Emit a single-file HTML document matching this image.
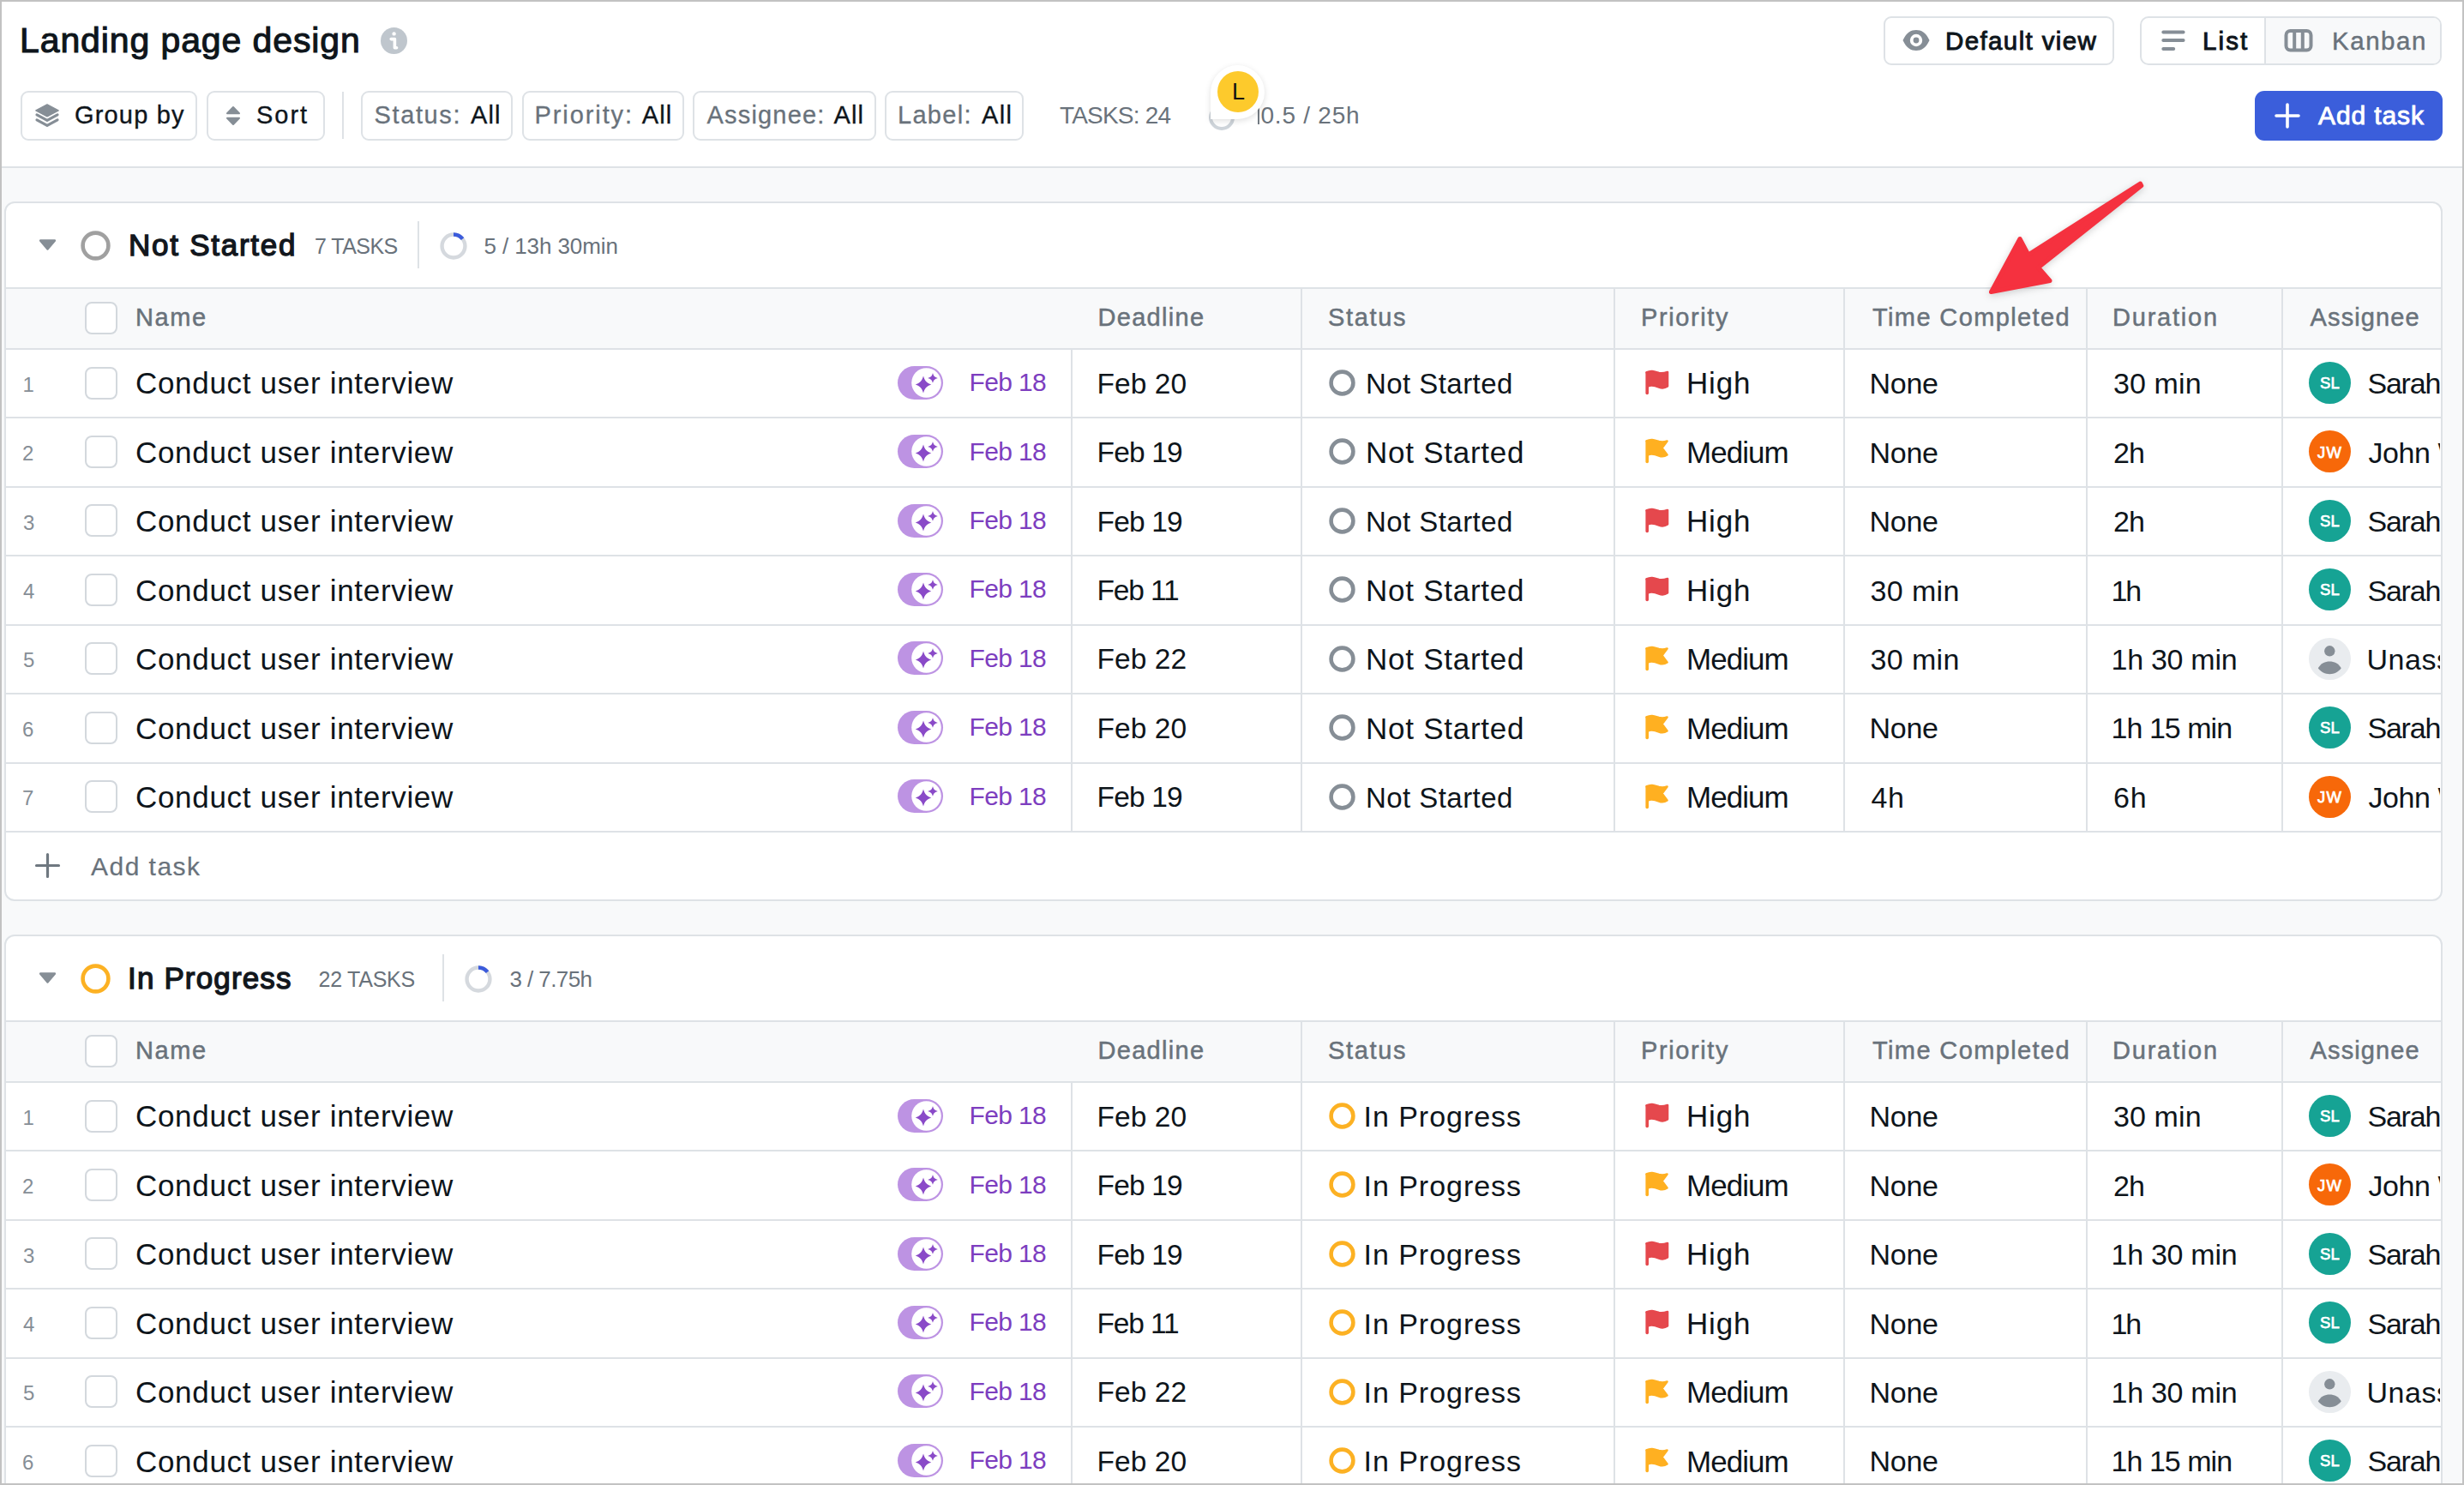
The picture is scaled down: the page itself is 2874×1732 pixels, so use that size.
<!DOCTYPE html>
<html><head><meta charset="utf-8"><title>Landing page design</title>
<style>
html,body{margin:0;padding:0;}
body{width:2874px;height:1732px;position:relative;overflow:hidden;background:#fff;font-family:"Liberation Sans", sans-serif;}
.t{position:absolute;white-space:nowrap;}
.clipR{position:absolute;left:0;top:0;width:2846px;height:1732px;overflow:hidden;}
</style></head><body>
<div style="position:absolute;left:0;top:196px;width:2874px;height:1536px;background:#f8f9fa"></div>
<div style="position:absolute;left:0;top:194px;width:2874px;height:2px;background:#dee2e6"></div>
<div class="t" style="left:23.00px;top:27.29px;font-size:41px;line-height:41px;color:#0e151b;letter-spacing:0.893px;-webkit-text-stroke:1.1px #0e151b;">Landing page design</div>
<svg style="position:absolute;left:443px;top:31px" width="33" height="33" viewBox="0 0 33 33"><circle cx="16.5" cy="16.5" r="15.5" fill="#bfc6cd"/><circle cx="16.6" cy="8.4" r="2.2" fill="#fff"/><path d="M13.2 14.6h4.2v10.2h2.2" stroke="#fff" stroke-width="3.6" fill="none" stroke-linejoin="round" stroke-linecap="round"/></svg>
<div style="position:absolute;left:24px;top:106px;width:206px;height:58px;box-sizing:border-box;border:2px solid #dee2e6;border-radius:9px;background:#fff"></div>
<svg style="position:absolute;left:40px;top:120px" width="30" height="30" viewBox="0 0 30 30"><path d="M15 1.8 L28.2 8.9 L15 16 L1.8 8.9 Z" fill="#868e96" stroke="#868e96" stroke-width="1.2" stroke-linejoin="round"/><path d="M3 13.8 L15 20.3 L27 13.8" fill="none" stroke="#868e96" stroke-width="3.2" stroke-linecap="round" stroke-linejoin="round"/><path d="M3 19.8 L15 26.3 L27 19.8" fill="none" stroke="#868e96" stroke-width="3.2" stroke-linecap="round" stroke-linejoin="round"/></svg>
<div class="t" style="left:87.00px;top:119.95px;font-size:29px;line-height:29px;color:#0e151b;letter-spacing:1.174px;-webkit-text-stroke:0.35px #0e151b;">Group by</div>
<div style="position:absolute;left:241px;top:106px;width:138px;height:58px;box-sizing:border-box;border:2px solid #dee2e6;border-radius:9px;background:#fff"></div>
<svg style="position:absolute;left:262px;top:122px" width="20" height="26" viewBox="0 0 20 26"><path d="M10 3 L17 10.2 H3 Z" fill="#868e96" stroke="#868e96" stroke-width="2" stroke-linejoin="round"/><path d="M10 23 L17 15.8 H3 Z" fill="#868e96" stroke="#868e96" stroke-width="2" stroke-linejoin="round"/></svg>
<div class="t" style="left:299.00px;top:119.95px;font-size:29px;line-height:29px;color:#0e151b;letter-spacing:1.957px;-webkit-text-stroke:0.35px #0e151b;">Sort</div>
<div style="position:absolute;left:399px;top:107px;width:2px;height:55px;background:#dee2e6"></div>
<div style="position:absolute;left:421px;top:106px;width:177px;height:58px;box-sizing:border-box;border:2px solid #dee2e6;border-radius:9px;background:#fff"></div>
<div class="t" style="left:436.50px;top:119.95px;font-size:29px;line-height:29px;color:#69727b;letter-spacing:1.631px;-webkit-text-stroke:0.3px #69727b;">Status:</div>
<div class="t" style="left:549.00px;top:119.95px;font-size:29px;line-height:29px;color:#0e151b;letter-spacing:1.107px;-webkit-text-stroke:0.35px #0e151b;">All</div>
<div style="position:absolute;left:609px;top:106px;width:189px;height:58px;box-sizing:border-box;border:2px solid #dee2e6;border-radius:9px;background:#fff"></div>
<div class="t" style="left:623.50px;top:119.95px;font-size:29px;line-height:29px;color:#69727b;letter-spacing:1.909px;-webkit-text-stroke:0.3px #69727b;">Priority:</div>
<div class="t" style="left:748.75px;top:119.95px;font-size:29px;line-height:29px;color:#0e151b;letter-spacing:1.107px;-webkit-text-stroke:0.35px #0e151b;">All</div>
<div style="position:absolute;left:808px;top:106px;width:214px;height:58px;box-sizing:border-box;border:2px solid #dee2e6;border-radius:9px;background:#fff"></div>
<div class="t" style="left:824.50px;top:119.95px;font-size:29px;line-height:29px;color:#69727b;letter-spacing:1.181px;-webkit-text-stroke:0.3px #69727b;">Assignee:</div>
<div class="t" style="left:972.50px;top:119.95px;font-size:29px;line-height:29px;color:#0e151b;letter-spacing:1.107px;-webkit-text-stroke:0.35px #0e151b;">All</div>
<div style="position:absolute;left:1032px;top:106px;width:162px;height:58px;box-sizing:border-box;border:2px solid #dee2e6;border-radius:9px;background:#fff"></div>
<div class="t" style="left:1047.00px;top:119.95px;font-size:29px;line-height:29px;color:#69727b;letter-spacing:1.309px;-webkit-text-stroke:0.3px #69727b;">Label:</div>
<div class="t" style="left:1145.00px;top:119.95px;font-size:29px;line-height:29px;color:#0e151b;letter-spacing:1.357px;-webkit-text-stroke:0.35px #0e151b;">All</div>
<div class="t" style="left:1236.00px;top:121.30px;font-size:28px;line-height:28px;color:#69727b;letter-spacing:-0.795px;">TASKS: 24</div>
<svg style="position:absolute;left:1405px;top:117px" width="40" height="40" viewBox="0 0 40 40"><circle cx="20" cy="20" r="13" fill="none" stroke="#ced4da" stroke-width="4"/></svg>
<div class="t" style="left:1470.50px;top:121.30px;font-size:28px;line-height:28px;color:#69727b;letter-spacing:0.762px;">0.5 / 25h</div>
<div style="position:absolute;left:1466.6px;top:125.5px;width:2.6px;height:19.5px;background:#737b83"></div>
<div style="position:absolute;left:1412px;top:76px;width:63px;height:63px;background:#fff;border-radius:32px 32px 32px 0;box-shadow:0 2px 7px rgba(0,0,0,0.13)"></div>
<div style="position:absolute;left:1420px;top:83px;width:48px;height:48px;background:#fdca2c;border-radius:50%"></div>
<div class="t" style="left:1437.00px;top:93.84px;font-size:27px;line-height:27px;color:#111;">L</div>
<div style="position:absolute;left:2197px;top:19px;width:269px;height:57px;box-sizing:border-box;border:2px solid #dee2e6;border-radius:9px;background:#fff"></div>
<svg style="position:absolute;left:2217px;top:33px" width="36" height="28" viewBox="0 0 36 28"><path d="M2.5 14 C7 4.5 12 2 18 2 C24 2 29 4.5 33.5 14 C29 23.5 24 26 18 26 C12 26 7 23.5 2.5 14 Z" fill="#868e96"/><circle cx="18" cy="14" r="7.2" fill="#fff"/><circle cx="18" cy="14" r="3.4" fill="#868e96"/></svg>
<div class="t" style="left:2269.00px;top:32.53px;font-size:29.5px;line-height:29.5px;color:#0e151b;letter-spacing:1.384px;-webkit-text-stroke:0.95px #0e151b;">Default view</div>
<div style="position:absolute;left:2496px;top:19px;width:352px;height:57px;box-sizing:border-box;border:2px solid #dee2e6;border-radius:10px;background:#fff;overflow:hidden"><div style="position:absolute;left:142.5px;top:0;width:208px;height:53px;background:#f8f9fa;border-left:2px solid #dee2e6"></div></div>
<svg style="position:absolute;left:2519px;top:33px" width="32" height="28" viewBox="0 0 32 28"><path d="M4.3 4.6 H27.6 M4.3 14 H27.6 M4.3 24 H16.2" stroke="#868e96" stroke-width="4" stroke-linecap="round"/></svg>
<div class="t" style="left:2569.00px;top:32.53px;font-size:29.5px;line-height:29.5px;color:#0e151b;letter-spacing:2.097px;-webkit-text-stroke:0.95px #0e151b;">List</div>
<svg style="position:absolute;left:2662px;top:32px" width="38" height="30" viewBox="0 0 38 30"><rect x="4.5" y="4" width="29" height="22.5" rx="5" fill="none" stroke="#868e96" stroke-width="4"/><path d="M14.2 4 V26.5 M23.8 4 V26.5" stroke="#868e96" stroke-width="4"/></svg>
<div class="t" style="left:2720.00px;top:32.53px;font-size:29.5px;line-height:29.5px;color:#69727b;letter-spacing:1.540px;-webkit-text-stroke:0.45px #69727b;">Kanban</div>
<div style="position:absolute;left:2630px;top:106px;width:219px;height:58px;background:#3b5edb;border-radius:11px"></div>
<svg style="position:absolute;left:2652px;top:119px" width="32" height="32" viewBox="0 0 32 32"><path d="M16 3 V29 M3 16 H29" stroke="#fff" stroke-width="3.6" stroke-linecap="round"/></svg>
<div class="t" style="left:2704.00px;top:119.61px;font-size:30px;line-height:30px;color:#fff;letter-spacing:0.895px;-webkit-text-stroke:0.9px #fff;">Add task</div>
<div style="position:absolute;left:5px;top:235px;width:2844px;height:816px;box-sizing:border-box;border:2px solid #dee2e6;border-radius:12px;background:#fff"></div>
<svg style="position:absolute;left:44px;top:278px" width="23" height="15" viewBox="0 0 23 15"><path d="M3.2 2.6 H19.8 L11.5 12.4 Z" fill="#868e96" stroke="#868e96" stroke-width="2.6" stroke-linejoin="round"/></svg>
<svg style="position:absolute;left:93px;top:268px" width="37" height="37" viewBox="0 0 37 37"><circle cx="18.5" cy="18.5" r="14.9" fill="none" stroke="#a0a0a0" stroke-width="4.6"/></svg>
<div class="t" style="left:150.00px;top:268.37px;font-size:35px;line-height:35px;color:#12171d;letter-spacing:1.743px;-webkit-text-stroke:1.35px #12171d;">Not Started</div>
<div class="t" style="left:367.00px;top:274.84px;font-size:25px;line-height:25px;color:#69727b;letter-spacing:-0.548px;">7 TASKS</div>
<div style="position:absolute;left:486.5px;top:258px;width:2px;height:55px;background:#dee2e6"></div>
<svg style="position:absolute;left:513px;top:271px" width="32" height="32" viewBox="0 0 32 32"><circle cx="16" cy="16" r="13.45" fill="none" stroke="#d5d9de" stroke-width="4.4"/><path d="M16 2.5500000000000007 A13.45 13.45 0 0 1 26.60 7.72" fill="none" stroke="#3b5bdb" stroke-width="4.4"/></svg>
<div class="t" style="left:564.40px;top:273.99px;font-size:26px;line-height:26px;color:#69727b;letter-spacing:-0.082px;">5 / 13h 30min</div>
<div style="position:absolute;left:7px;top:335px;width:2840px;height:2px;background:#dee2e6"></div>
<div style="position:absolute;left:7px;top:337px;width:2840px;height:69px;background:#f8f9fa"></div>
<div style="position:absolute;left:7px;top:406px;width:2840px;height:2px;background:#dee2e6"></div>
<div style="position:absolute;left:1517px;top:337px;width:2px;height:69px;background:#dee2e6"></div>
<div style="position:absolute;left:1882px;top:337px;width:2px;height:69px;background:#dee2e6"></div>
<div style="position:absolute;left:2150px;top:337px;width:2px;height:69px;background:#dee2e6"></div>
<div style="position:absolute;left:2433px;top:337px;width:2px;height:69px;background:#dee2e6"></div>
<div style="position:absolute;left:2661px;top:337px;width:2px;height:69px;background:#dee2e6"></div>
<div style="position:absolute;left:99px;top:352px;width:38px;height:38px;box-sizing:border-box;border:2px solid #d3d8dd;border-radius:8px;background:#fff"></div>
<div class="t" style="left:158.00px;top:356.45px;font-size:29px;line-height:29px;color:#69727b;letter-spacing:1.590px;-webkit-text-stroke:0.5px #69727b;">Name</div>
<div class="t" style="left:1280.50px;top:356.45px;font-size:29px;line-height:29px;color:#69727b;letter-spacing:1.308px;-webkit-text-stroke:0.5px #69727b;">Deadline</div>
<div class="t" style="left:1549.00px;top:356.45px;font-size:29px;line-height:29px;color:#69727b;letter-spacing:1.657px;-webkit-text-stroke:0.5px #69727b;">Status</div>
<div class="t" style="left:1914.00px;top:356.45px;font-size:29px;line-height:29px;color:#69727b;letter-spacing:1.610px;-webkit-text-stroke:0.5px #69727b;">Priority</div>
<div class="t" style="left:2184.00px;top:356.45px;font-size:29px;line-height:29px;color:#69727b;letter-spacing:1.382px;-webkit-text-stroke:0.5px #69727b;">Time Completed</div>
<div class="t" style="left:2464.00px;top:356.45px;font-size:29px;line-height:29px;color:#69727b;letter-spacing:1.788px;-webkit-text-stroke:0.5px #69727b;">Duration</div>
<div class="t" style="left:2694.60px;top:356.45px;font-size:29px;line-height:29px;color:#69727b;letter-spacing:1.118px;-webkit-text-stroke:0.5px #69727b;">Assignee</div>
<div style="position:absolute;left:7px;top:486px;width:2840px;height:2px;background:#dee2e6"></div>
<div style="position:absolute;left:1249px;top:408px;width:2px;height:78px;background:#dee2e6"></div>
<div style="position:absolute;left:1517px;top:408px;width:2px;height:78px;background:#dee2e6"></div>
<div style="position:absolute;left:1882px;top:408px;width:2px;height:78px;background:#dee2e6"></div>
<div style="position:absolute;left:2150px;top:408px;width:2px;height:78px;background:#dee2e6"></div>
<div style="position:absolute;left:2433px;top:408px;width:2px;height:78px;background:#dee2e6"></div>
<div style="position:absolute;left:2661px;top:408px;width:2px;height:78px;background:#dee2e6"></div>
<div class="t" style="left:26.50px;top:436.70px;font-size:24px;line-height:24px;color:#868e96;">1</div>
<div style="position:absolute;left:99px;top:427.5px;width:38px;height:38px;box-sizing:border-box;border:2px solid #d3d8dd;border-radius:8px;background:#fff"></div>
<div class="t" style="left:158.00px;top:429.39px;font-size:35px;line-height:35px;color:#0e151b;letter-spacing:0.680px;">Conduct user interview</div>
<svg style="position:absolute;left:1046px;top:425.7px" width="55" height="41" viewBox="0 0 55 41"><rect x="1" y="1" width="53" height="39" rx="19.5" fill="#bd93e3"/><circle cx="34.5" cy="20.5" r="17.3" fill="#fff"/><path d="M31 12.6 C32.6 18.4 35 20.8 40.2 22.6 C35 24.4 32.6 26.8 31 32.6 C29.4 26.8 27 24.4 21.8 22.6 C27 20.8 29.4 18.4 31 12.6 Z" fill="#8a4ac8"/><path d="M42 9.0 C42.9 12.5 44.1 13.9 47.8 14.9 C44.1 15.9 42.9 17.3 42 20.8 C41.1 17.3 39.9 15.9 36.2 14.9 C39.9 13.9 41.1 12.5 42 9.0 Z" fill="#8a4ac8"/></svg>
<div class="t" style="left:1130.50px;top:431.12px;font-size:30px;line-height:30px;color:#7d3ebf;letter-spacing:-0.643px;">Feb 18</div>
<div class="t" style="left:1279.50px;top:430.66px;font-size:33.5px;line-height:33.5px;color:#0e151b;letter-spacing:0.067px;">Feb 20</div>
<svg style="position:absolute;left:1548px;top:429.0px" width="35" height="35" viewBox="0 0 35 35"><circle cx="17.5" cy="17.5" r="12.9" fill="none" stroke="#868e96" stroke-width="4.6"/></svg>
<div class="t" style="left:1593.00px;top:431.08px;font-size:33px;line-height:33px;color:#0e151b;letter-spacing:0.444px;">Not Started</div>
<svg style="position:absolute;left:1916.4px;top:430.01500000000004px" width="32" height="32" viewBox="0 0 32 32"><path d="M4.5 4.5 C10 1.5 14 3.5 19 5 C23 6 26 5 29 4 V20.5 C26 22.5 23 23 19 21.5 C14 19.5 10 18.5 6 20.5" fill="#e5484d" stroke="#e5484d" stroke-width="2.6" stroke-linejoin="round" stroke-linecap="round"/><path d="M5.2 5 V28.5" stroke="#e5484d" stroke-width="3.6" stroke-linecap="round"/></svg>
<div class="t" style="left:1967.00px;top:429.39px;font-size:35px;line-height:35px;color:#0e151b;letter-spacing:0.828px;">High</div>
<div class="t" style="left:2180.50px;top:430.23px;font-size:34px;line-height:34px;color:#0e151b;letter-spacing:-0.291px;">None</div>
<div class="t" style="left:2465.00px;top:430.23px;font-size:34px;line-height:34px;color:#0e151b;letter-spacing:0.112px;">30 min</div>
<div style="position:absolute;left:2693px;top:422.01500000000004px;width:49px;height:49px;border-radius:50%;background:#16a394"></div>
<div class="t" style="left:2706.00px;top:438.15px;font-size:18.5px;line-height:18.5px;color:#fff;letter-spacing:0.161px;-webkit-text-stroke:0.75px #fff;">SL</div>
<div class="t" style="left:2761.40px;top:430.23px;font-size:34px;line-height:34px;color:#0e151b;letter-spacing:-1.180px;width:84.60px;overflow:hidden;">Sarah</div>
<div style="position:absolute;left:7px;top:567px;width:2840px;height:2px;background:#dee2e6"></div>
<div style="position:absolute;left:1249px;top:488px;width:2px;height:79px;background:#dee2e6"></div>
<div style="position:absolute;left:1517px;top:488px;width:2px;height:79px;background:#dee2e6"></div>
<div style="position:absolute;left:1882px;top:488px;width:2px;height:79px;background:#dee2e6"></div>
<div style="position:absolute;left:2150px;top:488px;width:2px;height:79px;background:#dee2e6"></div>
<div style="position:absolute;left:2433px;top:488px;width:2px;height:79px;background:#dee2e6"></div>
<div style="position:absolute;left:2661px;top:488px;width:2px;height:79px;background:#dee2e6"></div>
<div class="t" style="left:26.00px;top:517.13px;font-size:24px;line-height:24px;color:#868e96;">2</div>
<div style="position:absolute;left:99px;top:507.9px;width:38px;height:38px;box-sizing:border-box;border:2px solid #d3d8dd;border-radius:8px;background:#fff"></div>
<div class="t" style="left:158.00px;top:509.82px;font-size:35px;line-height:35px;color:#0e151b;letter-spacing:0.680px;">Conduct user interview</div>
<svg style="position:absolute;left:1046px;top:506.1px" width="55" height="41" viewBox="0 0 55 41"><rect x="1" y="1" width="53" height="39" rx="19.5" fill="#bd93e3"/><circle cx="34.5" cy="20.5" r="17.3" fill="#fff"/><path d="M31 12.6 C32.6 18.4 35 20.8 40.2 22.6 C35 24.4 32.6 26.8 31 32.6 C29.4 26.8 27 24.4 21.8 22.6 C27 20.8 29.4 18.4 31 12.6 Z" fill="#8a4ac8"/><path d="M42 9.0 C42.9 12.5 44.1 13.9 47.8 14.9 C44.1 15.9 42.9 17.3 42 20.8 C41.1 17.3 39.9 15.9 36.2 14.9 C39.9 13.9 41.1 12.5 42 9.0 Z" fill="#8a4ac8"/></svg>
<div class="t" style="left:1130.50px;top:511.55px;font-size:30px;line-height:30px;color:#7d3ebf;letter-spacing:-0.643px;">Feb 18</div>
<div class="t" style="left:1279.50px;top:511.09px;font-size:33.5px;line-height:33.5px;color:#0e151b;letter-spacing:-0.833px;">Feb 19</div>
<svg style="position:absolute;left:1548px;top:509.4px" width="35" height="35" viewBox="0 0 35 35"><circle cx="17.5" cy="17.5" r="12.9" fill="none" stroke="#868e96" stroke-width="4.6"/></svg>
<div class="t" style="left:1593.00px;top:510.07px;font-size:35px;line-height:35px;color:#0e151b;letter-spacing:0.743px;">Not Started</div>
<svg style="position:absolute;left:1916.4px;top:510.44499999999994px" width="32" height="32" viewBox="0 0 32 32"><path d="M4.5 4.5 C10 1.5 14 3.5 19 5 C23 6 25.5 5.5 28.5 4.5 L22.5 12.5 L28.5 20.5 C25.5 22.5 23 23 19 21.5 C14 19.5 10 18.5 6 20.5" fill="#ffb021" stroke="#ffb021" stroke-width="2.6" stroke-linejoin="round" stroke-linecap="round"/><path d="M5.2 5 V28.5" stroke="#ffb021" stroke-width="3.6" stroke-linecap="round"/></svg>
<div class="t" style="left:1967.00px;top:509.82px;font-size:35px;line-height:35px;color:#0e151b;letter-spacing:-0.965px;">Medium</div>
<div class="t" style="left:2180.50px;top:510.66px;font-size:34px;line-height:34px;color:#0e151b;letter-spacing:-0.291px;">None</div>
<div class="t" style="left:2465.00px;top:510.66px;font-size:34px;line-height:34px;color:#0e151b;letter-spacing:-0.909px;">2h</div>
<div style="position:absolute;left:2693px;top:502.44499999999994px;width:49px;height:49px;border-radius:50%;background:#f76809"></div>
<div class="t" style="left:2703.00px;top:518.58px;font-size:18.5px;line-height:18.5px;color:#fff;letter-spacing:1.350px;-webkit-text-stroke:0.75px #fff;">JW</div>
<div class="t" style="left:2762.40px;top:510.66px;font-size:34px;line-height:34px;color:#0e151b;letter-spacing:-0.406px;width:83.60px;overflow:hidden;">John Williams</div>
<div style="position:absolute;left:7px;top:647px;width:2840px;height:2px;background:#dee2e6"></div>
<div style="position:absolute;left:1249px;top:569px;width:2px;height:78px;background:#dee2e6"></div>
<div style="position:absolute;left:1517px;top:569px;width:2px;height:78px;background:#dee2e6"></div>
<div style="position:absolute;left:1882px;top:569px;width:2px;height:78px;background:#dee2e6"></div>
<div style="position:absolute;left:2150px;top:569px;width:2px;height:78px;background:#dee2e6"></div>
<div style="position:absolute;left:2433px;top:569px;width:2px;height:78px;background:#dee2e6"></div>
<div style="position:absolute;left:2661px;top:569px;width:2px;height:78px;background:#dee2e6"></div>
<div class="t" style="left:27.00px;top:597.56px;font-size:24px;line-height:24px;color:#868e96;">3</div>
<div style="position:absolute;left:99px;top:588.4px;width:38px;height:38px;box-sizing:border-box;border:2px solid #d3d8dd;border-radius:8px;background:#fff"></div>
<div class="t" style="left:158.00px;top:590.25px;font-size:35px;line-height:35px;color:#0e151b;letter-spacing:0.680px;">Conduct user interview</div>
<svg style="position:absolute;left:1046px;top:586.6px" width="55" height="41" viewBox="0 0 55 41"><rect x="1" y="1" width="53" height="39" rx="19.5" fill="#bd93e3"/><circle cx="34.5" cy="20.5" r="17.3" fill="#fff"/><path d="M31 12.6 C32.6 18.4 35 20.8 40.2 22.6 C35 24.4 32.6 26.8 31 32.6 C29.4 26.8 27 24.4 21.8 22.6 C27 20.8 29.4 18.4 31 12.6 Z" fill="#8a4ac8"/><path d="M42 9.0 C42.9 12.5 44.1 13.9 47.8 14.9 C44.1 15.9 42.9 17.3 42 20.8 C41.1 17.3 39.9 15.9 36.2 14.9 C39.9 13.9 41.1 12.5 42 9.0 Z" fill="#8a4ac8"/></svg>
<div class="t" style="left:1130.50px;top:591.98px;font-size:30px;line-height:30px;color:#7d3ebf;letter-spacing:-0.643px;">Feb 18</div>
<div class="t" style="left:1279.50px;top:591.52px;font-size:33.5px;line-height:33.5px;color:#0e151b;letter-spacing:-0.833px;">Feb 19</div>
<svg style="position:absolute;left:1548px;top:589.9px" width="35" height="35" viewBox="0 0 35 35"><circle cx="17.5" cy="17.5" r="12.9" fill="none" stroke="#868e96" stroke-width="4.6"/></svg>
<div class="t" style="left:1593.00px;top:591.94px;font-size:33px;line-height:33px;color:#0e151b;letter-spacing:0.444px;">Not Started</div>
<svg style="position:absolute;left:1916.4px;top:590.875px" width="32" height="32" viewBox="0 0 32 32"><path d="M4.5 4.5 C10 1.5 14 3.5 19 5 C23 6 26 5 29 4 V20.5 C26 22.5 23 23 19 21.5 C14 19.5 10 18.5 6 20.5" fill="#e5484d" stroke="#e5484d" stroke-width="2.6" stroke-linejoin="round" stroke-linecap="round"/><path d="M5.2 5 V28.5" stroke="#e5484d" stroke-width="3.6" stroke-linecap="round"/></svg>
<div class="t" style="left:1967.00px;top:590.25px;font-size:35px;line-height:35px;color:#0e151b;letter-spacing:0.828px;">High</div>
<div class="t" style="left:2180.50px;top:591.09px;font-size:34px;line-height:34px;color:#0e151b;letter-spacing:-0.291px;">None</div>
<div class="t" style="left:2465.00px;top:591.09px;font-size:34px;line-height:34px;color:#0e151b;letter-spacing:-0.909px;">2h</div>
<div style="position:absolute;left:2693px;top:582.875px;width:49px;height:49px;border-radius:50%;background:#16a394"></div>
<div class="t" style="left:2706.00px;top:599.01px;font-size:18.5px;line-height:18.5px;color:#fff;letter-spacing:0.161px;-webkit-text-stroke:0.75px #fff;">SL</div>
<div class="t" style="left:2761.40px;top:591.09px;font-size:34px;line-height:34px;color:#0e151b;letter-spacing:-1.180px;width:84.60px;overflow:hidden;">Sarah</div>
<div style="position:absolute;left:7px;top:728px;width:2840px;height:2px;background:#dee2e6"></div>
<div style="position:absolute;left:1249px;top:649px;width:2px;height:79px;background:#dee2e6"></div>
<div style="position:absolute;left:1517px;top:649px;width:2px;height:79px;background:#dee2e6"></div>
<div style="position:absolute;left:1882px;top:649px;width:2px;height:79px;background:#dee2e6"></div>
<div style="position:absolute;left:2150px;top:649px;width:2px;height:79px;background:#dee2e6"></div>
<div style="position:absolute;left:2433px;top:649px;width:2px;height:79px;background:#dee2e6"></div>
<div style="position:absolute;left:2661px;top:649px;width:2px;height:79px;background:#dee2e6"></div>
<div class="t" style="left:27.00px;top:677.99px;font-size:24px;line-height:24px;color:#868e96;">4</div>
<div style="position:absolute;left:99px;top:668.8px;width:38px;height:38px;box-sizing:border-box;border:2px solid #d3d8dd;border-radius:8px;background:#fff"></div>
<div class="t" style="left:158.00px;top:670.68px;font-size:35px;line-height:35px;color:#0e151b;letter-spacing:0.680px;">Conduct user interview</div>
<svg style="position:absolute;left:1046px;top:667.0px" width="55" height="41" viewBox="0 0 55 41"><rect x="1" y="1" width="53" height="39" rx="19.5" fill="#bd93e3"/><circle cx="34.5" cy="20.5" r="17.3" fill="#fff"/><path d="M31 12.6 C32.6 18.4 35 20.8 40.2 22.6 C35 24.4 32.6 26.8 31 32.6 C29.4 26.8 27 24.4 21.8 22.6 C27 20.8 29.4 18.4 31 12.6 Z" fill="#8a4ac8"/><path d="M42 9.0 C42.9 12.5 44.1 13.9 47.8 14.9 C44.1 15.9 42.9 17.3 42 20.8 C41.1 17.3 39.9 15.9 36.2 14.9 C39.9 13.9 41.1 12.5 42 9.0 Z" fill="#8a4ac8"/></svg>
<div class="t" style="left:1130.50px;top:672.41px;font-size:30px;line-height:30px;color:#7d3ebf;letter-spacing:-0.643px;">Feb 18</div>
<div class="t" style="left:1279.50px;top:671.95px;font-size:33.5px;line-height:33.5px;color:#0e151b;letter-spacing:-1.135px;">Feb 11</div>
<svg style="position:absolute;left:1548px;top:670.3px" width="35" height="35" viewBox="0 0 35 35"><circle cx="17.5" cy="17.5" r="12.9" fill="none" stroke="#868e96" stroke-width="4.6"/></svg>
<div class="t" style="left:1593.00px;top:670.93px;font-size:35px;line-height:35px;color:#0e151b;letter-spacing:0.743px;">Not Started</div>
<svg style="position:absolute;left:1916.4px;top:671.305px" width="32" height="32" viewBox="0 0 32 32"><path d="M4.5 4.5 C10 1.5 14 3.5 19 5 C23 6 26 5 29 4 V20.5 C26 22.5 23 23 19 21.5 C14 19.5 10 18.5 6 20.5" fill="#e5484d" stroke="#e5484d" stroke-width="2.6" stroke-linejoin="round" stroke-linecap="round"/><path d="M5.2 5 V28.5" stroke="#e5484d" stroke-width="3.6" stroke-linecap="round"/></svg>
<div class="t" style="left:1967.00px;top:670.68px;font-size:35px;line-height:35px;color:#0e151b;letter-spacing:0.828px;">High</div>
<div class="t" style="left:2181.50px;top:671.52px;font-size:34px;line-height:34px;color:#0e151b;letter-spacing:0.372px;">30 min</div>
<div class="t" style="left:2462.50px;top:671.52px;font-size:34px;line-height:34px;color:#0e151b;letter-spacing:-2.109px;">1h</div>
<div style="position:absolute;left:2693px;top:663.305px;width:49px;height:49px;border-radius:50%;background:#16a394"></div>
<div class="t" style="left:2706.00px;top:679.44px;font-size:18.5px;line-height:18.5px;color:#fff;letter-spacing:0.161px;-webkit-text-stroke:0.75px #fff;">SL</div>
<div class="t" style="left:2761.40px;top:671.52px;font-size:34px;line-height:34px;color:#0e151b;letter-spacing:-1.180px;width:84.60px;overflow:hidden;">Sarah</div>
<div style="position:absolute;left:7px;top:808px;width:2840px;height:2px;background:#dee2e6"></div>
<div style="position:absolute;left:1249px;top:730px;width:2px;height:78px;background:#dee2e6"></div>
<div style="position:absolute;left:1517px;top:730px;width:2px;height:78px;background:#dee2e6"></div>
<div style="position:absolute;left:1882px;top:730px;width:2px;height:78px;background:#dee2e6"></div>
<div style="position:absolute;left:2150px;top:730px;width:2px;height:78px;background:#dee2e6"></div>
<div style="position:absolute;left:2433px;top:730px;width:2px;height:78px;background:#dee2e6"></div>
<div style="position:absolute;left:2661px;top:730px;width:2px;height:78px;background:#dee2e6"></div>
<div class="t" style="left:27.00px;top:758.42px;font-size:24px;line-height:24px;color:#868e96;">5</div>
<div style="position:absolute;left:99px;top:749.2px;width:38px;height:38px;box-sizing:border-box;border:2px solid #d3d8dd;border-radius:8px;background:#fff"></div>
<div class="t" style="left:158.00px;top:751.11px;font-size:35px;line-height:35px;color:#0e151b;letter-spacing:0.680px;">Conduct user interview</div>
<svg style="position:absolute;left:1046px;top:747.4px" width="55" height="41" viewBox="0 0 55 41"><rect x="1" y="1" width="53" height="39" rx="19.5" fill="#bd93e3"/><circle cx="34.5" cy="20.5" r="17.3" fill="#fff"/><path d="M31 12.6 C32.6 18.4 35 20.8 40.2 22.6 C35 24.4 32.6 26.8 31 32.6 C29.4 26.8 27 24.4 21.8 22.6 C27 20.8 29.4 18.4 31 12.6 Z" fill="#8a4ac8"/><path d="M42 9.0 C42.9 12.5 44.1 13.9 47.8 14.9 C44.1 15.9 42.9 17.3 42 20.8 C41.1 17.3 39.9 15.9 36.2 14.9 C39.9 13.9 41.1 12.5 42 9.0 Z" fill="#8a4ac8"/></svg>
<div class="t" style="left:1130.50px;top:752.84px;font-size:30px;line-height:30px;color:#7d3ebf;letter-spacing:-0.643px;">Feb 18</div>
<div class="t" style="left:1279.50px;top:752.38px;font-size:33.5px;line-height:33.5px;color:#0e151b;letter-spacing:0.067px;">Feb 22</div>
<svg style="position:absolute;left:1548px;top:750.7px" width="35" height="35" viewBox="0 0 35 35"><circle cx="17.5" cy="17.5" r="12.9" fill="none" stroke="#868e96" stroke-width="4.6"/></svg>
<div class="t" style="left:1593.00px;top:751.36px;font-size:35px;line-height:35px;color:#0e151b;letter-spacing:0.743px;">Not Started</div>
<svg style="position:absolute;left:1916.4px;top:751.735px" width="32" height="32" viewBox="0 0 32 32"><path d="M4.5 4.5 C10 1.5 14 3.5 19 5 C23 6 25.5 5.5 28.5 4.5 L22.5 12.5 L28.5 20.5 C25.5 22.5 23 23 19 21.5 C14 19.5 10 18.5 6 20.5" fill="#ffb021" stroke="#ffb021" stroke-width="2.6" stroke-linejoin="round" stroke-linecap="round"/><path d="M5.2 5 V28.5" stroke="#ffb021" stroke-width="3.6" stroke-linecap="round"/></svg>
<div class="t" style="left:1967.00px;top:751.11px;font-size:35px;line-height:35px;color:#0e151b;letter-spacing:-0.965px;">Medium</div>
<div class="t" style="left:2181.50px;top:751.95px;font-size:34px;line-height:34px;color:#0e151b;letter-spacing:0.372px;">30 min</div>
<div class="t" style="left:2462.50px;top:751.95px;font-size:34px;line-height:34px;color:#0e151b;letter-spacing:-0.276px;">1h 30 min</div>
<svg style="position:absolute;left:2693px;top:743.735px" width="49" height="49" viewBox="0 0 49 49"><circle cx="24.5" cy="24.5" r="24.5" fill="#e9ecef"/><circle cx="24.3" cy="15.3" r="6.2" fill="#868e96"/><path d="M10.8 35.3 C14 29.5 19 27.4 24.3 27.4 C29.6 27.4 34.6 29.5 37.8 35.3 C34.2 40 29.8 42.2 24.3 42.2 C18.8 42.2 14.4 40 10.8 35.3 Z" fill="#868e96"/></svg>
<div class="t" style="left:2760.40px;top:751.95px;font-size:34px;line-height:34px;color:#0e151b;letter-spacing:0.550px;width:85.60px;overflow:hidden;">Unassigned</div>
<div style="position:absolute;left:7px;top:889px;width:2840px;height:2px;background:#dee2e6"></div>
<div style="position:absolute;left:1249px;top:810px;width:2px;height:79px;background:#dee2e6"></div>
<div style="position:absolute;left:1517px;top:810px;width:2px;height:79px;background:#dee2e6"></div>
<div style="position:absolute;left:1882px;top:810px;width:2px;height:79px;background:#dee2e6"></div>
<div style="position:absolute;left:2150px;top:810px;width:2px;height:79px;background:#dee2e6"></div>
<div style="position:absolute;left:2433px;top:810px;width:2px;height:79px;background:#dee2e6"></div>
<div style="position:absolute;left:2661px;top:810px;width:2px;height:79px;background:#dee2e6"></div>
<div class="t" style="left:26.00px;top:838.85px;font-size:24px;line-height:24px;color:#868e96;">6</div>
<div style="position:absolute;left:99px;top:829.7px;width:38px;height:38px;box-sizing:border-box;border:2px solid #d3d8dd;border-radius:8px;background:#fff"></div>
<div class="t" style="left:158.00px;top:831.54px;font-size:35px;line-height:35px;color:#0e151b;letter-spacing:0.680px;">Conduct user interview</div>
<svg style="position:absolute;left:1046px;top:827.9px" width="55" height="41" viewBox="0 0 55 41"><rect x="1" y="1" width="53" height="39" rx="19.5" fill="#bd93e3"/><circle cx="34.5" cy="20.5" r="17.3" fill="#fff"/><path d="M31 12.6 C32.6 18.4 35 20.8 40.2 22.6 C35 24.4 32.6 26.8 31 32.6 C29.4 26.8 27 24.4 21.8 22.6 C27 20.8 29.4 18.4 31 12.6 Z" fill="#8a4ac8"/><path d="M42 9.0 C42.9 12.5 44.1 13.9 47.8 14.9 C44.1 15.9 42.9 17.3 42 20.8 C41.1 17.3 39.9 15.9 36.2 14.9 C39.9 13.9 41.1 12.5 42 9.0 Z" fill="#8a4ac8"/></svg>
<div class="t" style="left:1130.50px;top:833.27px;font-size:30px;line-height:30px;color:#7d3ebf;letter-spacing:-0.643px;">Feb 18</div>
<div class="t" style="left:1279.50px;top:832.81px;font-size:33.5px;line-height:33.5px;color:#0e151b;letter-spacing:0.067px;">Feb 20</div>
<svg style="position:absolute;left:1548px;top:831.2px" width="35" height="35" viewBox="0 0 35 35"><circle cx="17.5" cy="17.5" r="12.9" fill="none" stroke="#868e96" stroke-width="4.6"/></svg>
<div class="t" style="left:1593.00px;top:831.79px;font-size:35px;line-height:35px;color:#0e151b;letter-spacing:0.743px;">Not Started</div>
<svg style="position:absolute;left:1916.4px;top:832.165px" width="32" height="32" viewBox="0 0 32 32"><path d="M4.5 4.5 C10 1.5 14 3.5 19 5 C23 6 25.5 5.5 28.5 4.5 L22.5 12.5 L28.5 20.5 C25.5 22.5 23 23 19 21.5 C14 19.5 10 18.5 6 20.5" fill="#ffb021" stroke="#ffb021" stroke-width="2.6" stroke-linejoin="round" stroke-linecap="round"/><path d="M5.2 5 V28.5" stroke="#ffb021" stroke-width="3.6" stroke-linecap="round"/></svg>
<div class="t" style="left:1967.00px;top:831.54px;font-size:35px;line-height:35px;color:#0e151b;letter-spacing:-0.965px;">Medium</div>
<div class="t" style="left:2180.50px;top:832.38px;font-size:34px;line-height:34px;color:#0e151b;letter-spacing:-0.291px;">None</div>
<div class="t" style="left:2462.50px;top:832.38px;font-size:34px;line-height:34px;color:#0e151b;letter-spacing:-0.963px;">1h 15 min</div>
<div style="position:absolute;left:2693px;top:824.165px;width:49px;height:49px;border-radius:50%;background:#16a394"></div>
<div class="t" style="left:2706.00px;top:840.30px;font-size:18.5px;line-height:18.5px;color:#fff;letter-spacing:0.161px;-webkit-text-stroke:0.75px #fff;">SL</div>
<div class="t" style="left:2761.40px;top:832.38px;font-size:34px;line-height:34px;color:#0e151b;letter-spacing:-1.180px;width:84.60px;overflow:hidden;">Sarah</div>
<div style="position:absolute;left:7px;top:969px;width:2840px;height:2px;background:#dee2e6"></div>
<div style="position:absolute;left:1249px;top:891px;width:2px;height:78px;background:#dee2e6"></div>
<div style="position:absolute;left:1517px;top:891px;width:2px;height:78px;background:#dee2e6"></div>
<div style="position:absolute;left:1882px;top:891px;width:2px;height:78px;background:#dee2e6"></div>
<div style="position:absolute;left:2150px;top:891px;width:2px;height:78px;background:#dee2e6"></div>
<div style="position:absolute;left:2433px;top:891px;width:2px;height:78px;background:#dee2e6"></div>
<div style="position:absolute;left:2661px;top:891px;width:2px;height:78px;background:#dee2e6"></div>
<div class="t" style="left:26.00px;top:919.28px;font-size:24px;line-height:24px;color:#868e96;">7</div>
<div style="position:absolute;left:99px;top:910.1px;width:38px;height:38px;box-sizing:border-box;border:2px solid #d3d8dd;border-radius:8px;background:#fff"></div>
<div class="t" style="left:158.00px;top:911.97px;font-size:35px;line-height:35px;color:#0e151b;letter-spacing:0.680px;">Conduct user interview</div>
<svg style="position:absolute;left:1046px;top:908.3px" width="55" height="41" viewBox="0 0 55 41"><rect x="1" y="1" width="53" height="39" rx="19.5" fill="#bd93e3"/><circle cx="34.5" cy="20.5" r="17.3" fill="#fff"/><path d="M31 12.6 C32.6 18.4 35 20.8 40.2 22.6 C35 24.4 32.6 26.8 31 32.6 C29.4 26.8 27 24.4 21.8 22.6 C27 20.8 29.4 18.4 31 12.6 Z" fill="#8a4ac8"/><path d="M42 9.0 C42.9 12.5 44.1 13.9 47.8 14.9 C44.1 15.9 42.9 17.3 42 20.8 C41.1 17.3 39.9 15.9 36.2 14.9 C39.9 13.9 41.1 12.5 42 9.0 Z" fill="#8a4ac8"/></svg>
<div class="t" style="left:1130.50px;top:913.70px;font-size:30px;line-height:30px;color:#7d3ebf;letter-spacing:-0.643px;">Feb 18</div>
<div class="t" style="left:1279.50px;top:913.24px;font-size:33.5px;line-height:33.5px;color:#0e151b;letter-spacing:-0.833px;">Feb 19</div>
<svg style="position:absolute;left:1548px;top:911.6px" width="35" height="35" viewBox="0 0 35 35"><circle cx="17.5" cy="17.5" r="12.9" fill="none" stroke="#868e96" stroke-width="4.6"/></svg>
<div class="t" style="left:1593.00px;top:913.66px;font-size:33px;line-height:33px;color:#0e151b;letter-spacing:0.444px;">Not Started</div>
<svg style="position:absolute;left:1916.4px;top:912.595px" width="32" height="32" viewBox="0 0 32 32"><path d="M4.5 4.5 C10 1.5 14 3.5 19 5 C23 6 25.5 5.5 28.5 4.5 L22.5 12.5 L28.5 20.5 C25.5 22.5 23 23 19 21.5 C14 19.5 10 18.5 6 20.5" fill="#ffb021" stroke="#ffb021" stroke-width="2.6" stroke-linejoin="round" stroke-linecap="round"/><path d="M5.2 5 V28.5" stroke="#ffb021" stroke-width="3.6" stroke-linecap="round"/></svg>
<div class="t" style="left:1967.00px;top:911.97px;font-size:35px;line-height:35px;color:#0e151b;letter-spacing:-0.965px;">Medium</div>
<div class="t" style="left:2182.50px;top:912.81px;font-size:34px;line-height:34px;color:#0e151b;letter-spacing:0.591px;">4h</div>
<div class="t" style="left:2465.00px;top:912.81px;font-size:34px;line-height:34px;color:#0e151b;letter-spacing:0.791px;">6h</div>
<div style="position:absolute;left:2693px;top:904.595px;width:49px;height:49px;border-radius:50%;background:#f76809"></div>
<div class="t" style="left:2703.00px;top:920.73px;font-size:18.5px;line-height:18.5px;color:#fff;letter-spacing:1.350px;-webkit-text-stroke:0.75px #fff;">JW</div>
<div class="t" style="left:2762.40px;top:912.81px;font-size:34px;line-height:34px;color:#0e151b;letter-spacing:-0.406px;width:83.60px;overflow:hidden;">John Williams</div>
<svg style="position:absolute;left:40px;top:994px" width="31" height="31" viewBox="0 0 31 31"><path d="M15.5 2.5 V28.5 M2.5 15.5 H28.5" stroke="#6f7880" stroke-width="3.2" stroke-linecap="round"/></svg>
<div class="t" style="left:106.00px;top:995.61px;font-size:30px;line-height:30px;color:#69727b;letter-spacing:1.467px;-webkit-text-stroke:0.2px #69727b;">Add task</div>
<div style="position:absolute;left:5px;top:1090px;width:2844px;height:816px;box-sizing:border-box;border:2px solid #dee2e6;border-radius:12px;background:#fff"></div>
<svg style="position:absolute;left:44px;top:1133px" width="23" height="15" viewBox="0 0 23 15"><path d="M3.2 2.6 H19.8 L11.5 12.4 Z" fill="#868e96" stroke="#868e96" stroke-width="2.6" stroke-linejoin="round"/></svg>
<svg style="position:absolute;left:93px;top:1123px" width="37" height="37" viewBox="0 0 37 37"><circle cx="18.5" cy="18.5" r="14.9" fill="none" stroke="#fcb123" stroke-width="4.6"/></svg>
<div class="t" style="left:149.00px;top:1123.37px;font-size:35px;line-height:35px;color:#12171d;letter-spacing:1.154px;-webkit-text-stroke:1.35px #12171d;">In Progress</div>
<div class="t" style="left:371.50px;top:1129.84px;font-size:25px;line-height:25px;color:#69727b;letter-spacing:-0.242px;">22 TASKS</div>
<div style="position:absolute;left:516px;top:1113px;width:2px;height:55px;background:#dee2e6"></div>
<svg style="position:absolute;left:542px;top:1126px" width="32" height="32" viewBox="0 0 32 32"><circle cx="16" cy="16" r="13.45" fill="none" stroke="#d5d9de" stroke-width="4.4"/><path d="M16 2.5500000000000007 A13.45 13.45 0 0 1 26.60 7.72" fill="none" stroke="#3b5bdb" stroke-width="4.4"/></svg>
<div class="t" style="left:594.60px;top:1128.99px;font-size:26px;line-height:26px;color:#69727b;letter-spacing:-0.604px;">3 / 7.75h</div>
<div style="position:absolute;left:7px;top:1190px;width:2840px;height:2px;background:#dee2e6"></div>
<div style="position:absolute;left:7px;top:1192px;width:2840px;height:69px;background:#f8f9fa"></div>
<div style="position:absolute;left:7px;top:1261px;width:2840px;height:2px;background:#dee2e6"></div>
<div style="position:absolute;left:1517px;top:1192px;width:2px;height:69px;background:#dee2e6"></div>
<div style="position:absolute;left:1882px;top:1192px;width:2px;height:69px;background:#dee2e6"></div>
<div style="position:absolute;left:2150px;top:1192px;width:2px;height:69px;background:#dee2e6"></div>
<div style="position:absolute;left:2433px;top:1192px;width:2px;height:69px;background:#dee2e6"></div>
<div style="position:absolute;left:2661px;top:1192px;width:2px;height:69px;background:#dee2e6"></div>
<div style="position:absolute;left:99px;top:1207px;width:38px;height:38px;box-sizing:border-box;border:2px solid #d3d8dd;border-radius:8px;background:#fff"></div>
<div class="t" style="left:158.00px;top:1211.45px;font-size:29px;line-height:29px;color:#69727b;letter-spacing:1.590px;-webkit-text-stroke:0.5px #69727b;">Name</div>
<div class="t" style="left:1280.50px;top:1211.45px;font-size:29px;line-height:29px;color:#69727b;letter-spacing:1.308px;-webkit-text-stroke:0.5px #69727b;">Deadline</div>
<div class="t" style="left:1549.00px;top:1211.45px;font-size:29px;line-height:29px;color:#69727b;letter-spacing:1.657px;-webkit-text-stroke:0.5px #69727b;">Status</div>
<div class="t" style="left:1914.00px;top:1211.45px;font-size:29px;line-height:29px;color:#69727b;letter-spacing:1.610px;-webkit-text-stroke:0.5px #69727b;">Priority</div>
<div class="t" style="left:2184.00px;top:1211.45px;font-size:29px;line-height:29px;color:#69727b;letter-spacing:1.382px;-webkit-text-stroke:0.5px #69727b;">Time Completed</div>
<div class="t" style="left:2464.00px;top:1211.45px;font-size:29px;line-height:29px;color:#69727b;letter-spacing:1.788px;-webkit-text-stroke:0.5px #69727b;">Duration</div>
<div class="t" style="left:2694.60px;top:1211.45px;font-size:29px;line-height:29px;color:#69727b;letter-spacing:1.118px;-webkit-text-stroke:0.5px #69727b;">Assignee</div>
<div style="position:absolute;left:7px;top:1341px;width:2840px;height:2px;background:#dee2e6"></div>
<div style="position:absolute;left:1249px;top:1263px;width:2px;height:78px;background:#dee2e6"></div>
<div style="position:absolute;left:1517px;top:1263px;width:2px;height:78px;background:#dee2e6"></div>
<div style="position:absolute;left:1882px;top:1263px;width:2px;height:78px;background:#dee2e6"></div>
<div style="position:absolute;left:2150px;top:1263px;width:2px;height:78px;background:#dee2e6"></div>
<div style="position:absolute;left:2433px;top:1263px;width:2px;height:78px;background:#dee2e6"></div>
<div style="position:absolute;left:2661px;top:1263px;width:2px;height:78px;background:#dee2e6"></div>
<div class="t" style="left:26.50px;top:1291.70px;font-size:24px;line-height:24px;color:#868e96;">1</div>
<div style="position:absolute;left:99px;top:1282.5px;width:38px;height:38px;box-sizing:border-box;border:2px solid #d3d8dd;border-radius:8px;background:#fff"></div>
<div class="t" style="left:158.00px;top:1284.39px;font-size:35px;line-height:35px;color:#0e151b;letter-spacing:0.680px;">Conduct user interview</div>
<svg style="position:absolute;left:1046px;top:1280.7px" width="55" height="41" viewBox="0 0 55 41"><rect x="1" y="1" width="53" height="39" rx="19.5" fill="#bd93e3"/><circle cx="34.5" cy="20.5" r="17.3" fill="#fff"/><path d="M31 12.6 C32.6 18.4 35 20.8 40.2 22.6 C35 24.4 32.6 26.8 31 32.6 C29.4 26.8 27 24.4 21.8 22.6 C27 20.8 29.4 18.4 31 12.6 Z" fill="#8a4ac8"/><path d="M42 9.0 C42.9 12.5 44.1 13.9 47.8 14.9 C44.1 15.9 42.9 17.3 42 20.8 C41.1 17.3 39.9 15.9 36.2 14.9 C39.9 13.9 41.1 12.5 42 9.0 Z" fill="#8a4ac8"/></svg>
<div class="t" style="left:1130.50px;top:1286.12px;font-size:30px;line-height:30px;color:#7d3ebf;letter-spacing:-0.643px;">Feb 18</div>
<div class="t" style="left:1279.50px;top:1285.66px;font-size:33.5px;line-height:33.5px;color:#0e151b;letter-spacing:0.067px;">Feb 20</div>
<svg style="position:absolute;left:1548px;top:1284.0px" width="35" height="35" viewBox="0 0 35 35"><circle cx="17.5" cy="17.5" r="12.9" fill="none" stroke="#fcb123" stroke-width="4.6"/></svg>
<div class="t" style="left:1590.50px;top:1285.23px;font-size:34px;line-height:34px;color:#0e151b;letter-spacing:0.965px;">In Progress</div>
<svg style="position:absolute;left:1916.4px;top:1285.015px" width="32" height="32" viewBox="0 0 32 32"><path d="M4.5 4.5 C10 1.5 14 3.5 19 5 C23 6 26 5 29 4 V20.5 C26 22.5 23 23 19 21.5 C14 19.5 10 18.5 6 20.5" fill="#e5484d" stroke="#e5484d" stroke-width="2.6" stroke-linejoin="round" stroke-linecap="round"/><path d="M5.2 5 V28.5" stroke="#e5484d" stroke-width="3.6" stroke-linecap="round"/></svg>
<div class="t" style="left:1967.00px;top:1284.39px;font-size:35px;line-height:35px;color:#0e151b;letter-spacing:0.828px;">High</div>
<div class="t" style="left:2180.50px;top:1285.23px;font-size:34px;line-height:34px;color:#0e151b;letter-spacing:-0.291px;">None</div>
<div class="t" style="left:2465.00px;top:1285.23px;font-size:34px;line-height:34px;color:#0e151b;letter-spacing:0.112px;">30 min</div>
<div style="position:absolute;left:2693px;top:1277.015px;width:49px;height:49px;border-radius:50%;background:#16a394"></div>
<div class="t" style="left:2706.00px;top:1293.15px;font-size:18.5px;line-height:18.5px;color:#fff;letter-spacing:0.161px;-webkit-text-stroke:0.75px #fff;">SL</div>
<div class="t" style="left:2761.40px;top:1285.23px;font-size:34px;line-height:34px;color:#0e151b;letter-spacing:-1.180px;width:84.60px;overflow:hidden;">Sarah</div>
<div style="position:absolute;left:7px;top:1422px;width:2840px;height:2px;background:#dee2e6"></div>
<div style="position:absolute;left:1249px;top:1343px;width:2px;height:79px;background:#dee2e6"></div>
<div style="position:absolute;left:1517px;top:1343px;width:2px;height:79px;background:#dee2e6"></div>
<div style="position:absolute;left:1882px;top:1343px;width:2px;height:79px;background:#dee2e6"></div>
<div style="position:absolute;left:2150px;top:1343px;width:2px;height:79px;background:#dee2e6"></div>
<div style="position:absolute;left:2433px;top:1343px;width:2px;height:79px;background:#dee2e6"></div>
<div style="position:absolute;left:2661px;top:1343px;width:2px;height:79px;background:#dee2e6"></div>
<div class="t" style="left:26.00px;top:1372.13px;font-size:24px;line-height:24px;color:#868e96;">2</div>
<div style="position:absolute;left:99px;top:1362.9px;width:38px;height:38px;box-sizing:border-box;border:2px solid #d3d8dd;border-radius:8px;background:#fff"></div>
<div class="t" style="left:158.00px;top:1364.82px;font-size:35px;line-height:35px;color:#0e151b;letter-spacing:0.680px;">Conduct user interview</div>
<svg style="position:absolute;left:1046px;top:1361.1px" width="55" height="41" viewBox="0 0 55 41"><rect x="1" y="1" width="53" height="39" rx="19.5" fill="#bd93e3"/><circle cx="34.5" cy="20.5" r="17.3" fill="#fff"/><path d="M31 12.6 C32.6 18.4 35 20.8 40.2 22.6 C35 24.4 32.6 26.8 31 32.6 C29.4 26.8 27 24.4 21.8 22.6 C27 20.8 29.4 18.4 31 12.6 Z" fill="#8a4ac8"/><path d="M42 9.0 C42.9 12.5 44.1 13.9 47.8 14.9 C44.1 15.9 42.9 17.3 42 20.8 C41.1 17.3 39.9 15.9 36.2 14.9 C39.9 13.9 41.1 12.5 42 9.0 Z" fill="#8a4ac8"/></svg>
<div class="t" style="left:1130.50px;top:1366.55px;font-size:30px;line-height:30px;color:#7d3ebf;letter-spacing:-0.643px;">Feb 18</div>
<div class="t" style="left:1279.50px;top:1366.09px;font-size:33.5px;line-height:33.5px;color:#0e151b;letter-spacing:-0.833px;">Feb 19</div>
<svg style="position:absolute;left:1548px;top:1364.4px" width="35" height="35" viewBox="0 0 35 35"><circle cx="17.5" cy="17.5" r="12.9" fill="none" stroke="#fcb123" stroke-width="4.6"/></svg>
<div class="t" style="left:1590.50px;top:1365.66px;font-size:34px;line-height:34px;color:#0e151b;letter-spacing:0.965px;">In Progress</div>
<svg style="position:absolute;left:1916.4px;top:1365.445px" width="32" height="32" viewBox="0 0 32 32"><path d="M4.5 4.5 C10 1.5 14 3.5 19 5 C23 6 25.5 5.5 28.5 4.5 L22.5 12.5 L28.5 20.5 C25.5 22.5 23 23 19 21.5 C14 19.5 10 18.5 6 20.5" fill="#ffb021" stroke="#ffb021" stroke-width="2.6" stroke-linejoin="round" stroke-linecap="round"/><path d="M5.2 5 V28.5" stroke="#ffb021" stroke-width="3.6" stroke-linecap="round"/></svg>
<div class="t" style="left:1967.00px;top:1364.82px;font-size:35px;line-height:35px;color:#0e151b;letter-spacing:-0.965px;">Medium</div>
<div class="t" style="left:2180.50px;top:1365.66px;font-size:34px;line-height:34px;color:#0e151b;letter-spacing:-0.291px;">None</div>
<div class="t" style="left:2465.00px;top:1365.66px;font-size:34px;line-height:34px;color:#0e151b;letter-spacing:-0.909px;">2h</div>
<div style="position:absolute;left:2693px;top:1357.445px;width:49px;height:49px;border-radius:50%;background:#f76809"></div>
<div class="t" style="left:2703.00px;top:1373.58px;font-size:18.5px;line-height:18.5px;color:#fff;letter-spacing:1.350px;-webkit-text-stroke:0.75px #fff;">JW</div>
<div class="t" style="left:2762.40px;top:1365.66px;font-size:34px;line-height:34px;color:#0e151b;letter-spacing:-0.406px;width:83.60px;overflow:hidden;">John Williams</div>
<div style="position:absolute;left:7px;top:1502px;width:2840px;height:2px;background:#dee2e6"></div>
<div style="position:absolute;left:1249px;top:1424px;width:2px;height:78px;background:#dee2e6"></div>
<div style="position:absolute;left:1517px;top:1424px;width:2px;height:78px;background:#dee2e6"></div>
<div style="position:absolute;left:1882px;top:1424px;width:2px;height:78px;background:#dee2e6"></div>
<div style="position:absolute;left:2150px;top:1424px;width:2px;height:78px;background:#dee2e6"></div>
<div style="position:absolute;left:2433px;top:1424px;width:2px;height:78px;background:#dee2e6"></div>
<div style="position:absolute;left:2661px;top:1424px;width:2px;height:78px;background:#dee2e6"></div>
<div class="t" style="left:27.00px;top:1452.56px;font-size:24px;line-height:24px;color:#868e96;">3</div>
<div style="position:absolute;left:99px;top:1443.4px;width:38px;height:38px;box-sizing:border-box;border:2px solid #d3d8dd;border-radius:8px;background:#fff"></div>
<div class="t" style="left:158.00px;top:1445.25px;font-size:35px;line-height:35px;color:#0e151b;letter-spacing:0.680px;">Conduct user interview</div>
<svg style="position:absolute;left:1046px;top:1441.6px" width="55" height="41" viewBox="0 0 55 41"><rect x="1" y="1" width="53" height="39" rx="19.5" fill="#bd93e3"/><circle cx="34.5" cy="20.5" r="17.3" fill="#fff"/><path d="M31 12.6 C32.6 18.4 35 20.8 40.2 22.6 C35 24.4 32.6 26.8 31 32.6 C29.4 26.8 27 24.4 21.8 22.6 C27 20.8 29.4 18.4 31 12.6 Z" fill="#8a4ac8"/><path d="M42 9.0 C42.9 12.5 44.1 13.9 47.8 14.9 C44.1 15.9 42.9 17.3 42 20.8 C41.1 17.3 39.9 15.9 36.2 14.9 C39.9 13.9 41.1 12.5 42 9.0 Z" fill="#8a4ac8"/></svg>
<div class="t" style="left:1130.50px;top:1446.98px;font-size:30px;line-height:30px;color:#7d3ebf;letter-spacing:-0.643px;">Feb 18</div>
<div class="t" style="left:1279.50px;top:1446.52px;font-size:33.5px;line-height:33.5px;color:#0e151b;letter-spacing:-0.833px;">Feb 19</div>
<svg style="position:absolute;left:1548px;top:1444.9px" width="35" height="35" viewBox="0 0 35 35"><circle cx="17.5" cy="17.5" r="12.9" fill="none" stroke="#fcb123" stroke-width="4.6"/></svg>
<div class="t" style="left:1590.50px;top:1446.09px;font-size:34px;line-height:34px;color:#0e151b;letter-spacing:0.965px;">In Progress</div>
<svg style="position:absolute;left:1916.4px;top:1445.875px" width="32" height="32" viewBox="0 0 32 32"><path d="M4.5 4.5 C10 1.5 14 3.5 19 5 C23 6 26 5 29 4 V20.5 C26 22.5 23 23 19 21.5 C14 19.5 10 18.5 6 20.5" fill="#e5484d" stroke="#e5484d" stroke-width="2.6" stroke-linejoin="round" stroke-linecap="round"/><path d="M5.2 5 V28.5" stroke="#e5484d" stroke-width="3.6" stroke-linecap="round"/></svg>
<div class="t" style="left:1967.00px;top:1445.25px;font-size:35px;line-height:35px;color:#0e151b;letter-spacing:0.828px;">High</div>
<div class="t" style="left:2180.50px;top:1446.09px;font-size:34px;line-height:34px;color:#0e151b;letter-spacing:-0.291px;">None</div>
<div class="t" style="left:2462.50px;top:1446.09px;font-size:34px;line-height:34px;color:#0e151b;letter-spacing:-0.276px;">1h 30 min</div>
<div style="position:absolute;left:2693px;top:1437.875px;width:49px;height:49px;border-radius:50%;background:#16a394"></div>
<div class="t" style="left:2706.00px;top:1454.01px;font-size:18.5px;line-height:18.5px;color:#fff;letter-spacing:0.161px;-webkit-text-stroke:0.75px #fff;">SL</div>
<div class="t" style="left:2761.40px;top:1446.09px;font-size:34px;line-height:34px;color:#0e151b;letter-spacing:-1.180px;width:84.60px;overflow:hidden;">Sarah</div>
<div style="position:absolute;left:7px;top:1583px;width:2840px;height:2px;background:#dee2e6"></div>
<div style="position:absolute;left:1249px;top:1504px;width:2px;height:79px;background:#dee2e6"></div>
<div style="position:absolute;left:1517px;top:1504px;width:2px;height:79px;background:#dee2e6"></div>
<div style="position:absolute;left:1882px;top:1504px;width:2px;height:79px;background:#dee2e6"></div>
<div style="position:absolute;left:2150px;top:1504px;width:2px;height:79px;background:#dee2e6"></div>
<div style="position:absolute;left:2433px;top:1504px;width:2px;height:79px;background:#dee2e6"></div>
<div style="position:absolute;left:2661px;top:1504px;width:2px;height:79px;background:#dee2e6"></div>
<div class="t" style="left:27.00px;top:1532.99px;font-size:24px;line-height:24px;color:#868e96;">4</div>
<div style="position:absolute;left:99px;top:1523.8px;width:38px;height:38px;box-sizing:border-box;border:2px solid #d3d8dd;border-radius:8px;background:#fff"></div>
<div class="t" style="left:158.00px;top:1525.68px;font-size:35px;line-height:35px;color:#0e151b;letter-spacing:0.680px;">Conduct user interview</div>
<svg style="position:absolute;left:1046px;top:1522.0px" width="55" height="41" viewBox="0 0 55 41"><rect x="1" y="1" width="53" height="39" rx="19.5" fill="#bd93e3"/><circle cx="34.5" cy="20.5" r="17.3" fill="#fff"/><path d="M31 12.6 C32.6 18.4 35 20.8 40.2 22.6 C35 24.4 32.6 26.8 31 32.6 C29.4 26.8 27 24.4 21.8 22.6 C27 20.8 29.4 18.4 31 12.6 Z" fill="#8a4ac8"/><path d="M42 9.0 C42.9 12.5 44.1 13.9 47.8 14.9 C44.1 15.9 42.9 17.3 42 20.8 C41.1 17.3 39.9 15.9 36.2 14.9 C39.9 13.9 41.1 12.5 42 9.0 Z" fill="#8a4ac8"/></svg>
<div class="t" style="left:1130.50px;top:1527.41px;font-size:30px;line-height:30px;color:#7d3ebf;letter-spacing:-0.643px;">Feb 18</div>
<div class="t" style="left:1279.50px;top:1526.95px;font-size:33.5px;line-height:33.5px;color:#0e151b;letter-spacing:-1.135px;">Feb 11</div>
<svg style="position:absolute;left:1548px;top:1525.3px" width="35" height="35" viewBox="0 0 35 35"><circle cx="17.5" cy="17.5" r="12.9" fill="none" stroke="#fcb123" stroke-width="4.6"/></svg>
<div class="t" style="left:1590.50px;top:1526.52px;font-size:34px;line-height:34px;color:#0e151b;letter-spacing:0.965px;">In Progress</div>
<svg style="position:absolute;left:1916.4px;top:1526.305px" width="32" height="32" viewBox="0 0 32 32"><path d="M4.5 4.5 C10 1.5 14 3.5 19 5 C23 6 26 5 29 4 V20.5 C26 22.5 23 23 19 21.5 C14 19.5 10 18.5 6 20.5" fill="#e5484d" stroke="#e5484d" stroke-width="2.6" stroke-linejoin="round" stroke-linecap="round"/><path d="M5.2 5 V28.5" stroke="#e5484d" stroke-width="3.6" stroke-linecap="round"/></svg>
<div class="t" style="left:1967.00px;top:1525.68px;font-size:35px;line-height:35px;color:#0e151b;letter-spacing:0.828px;">High</div>
<div class="t" style="left:2180.50px;top:1526.52px;font-size:34px;line-height:34px;color:#0e151b;letter-spacing:-0.291px;">None</div>
<div class="t" style="left:2462.50px;top:1526.52px;font-size:34px;line-height:34px;color:#0e151b;letter-spacing:-2.109px;">1h</div>
<div style="position:absolute;left:2693px;top:1518.305px;width:49px;height:49px;border-radius:50%;background:#16a394"></div>
<div class="t" style="left:2706.00px;top:1534.44px;font-size:18.5px;line-height:18.5px;color:#fff;letter-spacing:0.161px;-webkit-text-stroke:0.75px #fff;">SL</div>
<div class="t" style="left:2761.40px;top:1526.52px;font-size:34px;line-height:34px;color:#0e151b;letter-spacing:-1.180px;width:84.60px;overflow:hidden;">Sarah</div>
<div style="position:absolute;left:7px;top:1663px;width:2840px;height:2px;background:#dee2e6"></div>
<div style="position:absolute;left:1249px;top:1585px;width:2px;height:78px;background:#dee2e6"></div>
<div style="position:absolute;left:1517px;top:1585px;width:2px;height:78px;background:#dee2e6"></div>
<div style="position:absolute;left:1882px;top:1585px;width:2px;height:78px;background:#dee2e6"></div>
<div style="position:absolute;left:2150px;top:1585px;width:2px;height:78px;background:#dee2e6"></div>
<div style="position:absolute;left:2433px;top:1585px;width:2px;height:78px;background:#dee2e6"></div>
<div style="position:absolute;left:2661px;top:1585px;width:2px;height:78px;background:#dee2e6"></div>
<div class="t" style="left:27.00px;top:1613.42px;font-size:24px;line-height:24px;color:#868e96;">5</div>
<div style="position:absolute;left:99px;top:1604.2px;width:38px;height:38px;box-sizing:border-box;border:2px solid #d3d8dd;border-radius:8px;background:#fff"></div>
<div class="t" style="left:158.00px;top:1606.11px;font-size:35px;line-height:35px;color:#0e151b;letter-spacing:0.680px;">Conduct user interview</div>
<svg style="position:absolute;left:1046px;top:1602.4px" width="55" height="41" viewBox="0 0 55 41"><rect x="1" y="1" width="53" height="39" rx="19.5" fill="#bd93e3"/><circle cx="34.5" cy="20.5" r="17.3" fill="#fff"/><path d="M31 12.6 C32.6 18.4 35 20.8 40.2 22.6 C35 24.4 32.6 26.8 31 32.6 C29.4 26.8 27 24.4 21.8 22.6 C27 20.8 29.4 18.4 31 12.6 Z" fill="#8a4ac8"/><path d="M42 9.0 C42.9 12.5 44.1 13.9 47.8 14.9 C44.1 15.9 42.9 17.3 42 20.8 C41.1 17.3 39.9 15.9 36.2 14.9 C39.9 13.9 41.1 12.5 42 9.0 Z" fill="#8a4ac8"/></svg>
<div class="t" style="left:1130.50px;top:1607.84px;font-size:30px;line-height:30px;color:#7d3ebf;letter-spacing:-0.643px;">Feb 18</div>
<div class="t" style="left:1279.50px;top:1607.38px;font-size:33.5px;line-height:33.5px;color:#0e151b;letter-spacing:0.067px;">Feb 22</div>
<svg style="position:absolute;left:1548px;top:1605.7px" width="35" height="35" viewBox="0 0 35 35"><circle cx="17.5" cy="17.5" r="12.9" fill="none" stroke="#fcb123" stroke-width="4.6"/></svg>
<div class="t" style="left:1590.50px;top:1606.95px;font-size:34px;line-height:34px;color:#0e151b;letter-spacing:0.965px;">In Progress</div>
<svg style="position:absolute;left:1916.4px;top:1606.735px" width="32" height="32" viewBox="0 0 32 32"><path d="M4.5 4.5 C10 1.5 14 3.5 19 5 C23 6 25.5 5.5 28.5 4.5 L22.5 12.5 L28.5 20.5 C25.5 22.5 23 23 19 21.5 C14 19.5 10 18.5 6 20.5" fill="#ffb021" stroke="#ffb021" stroke-width="2.6" stroke-linejoin="round" stroke-linecap="round"/><path d="M5.2 5 V28.5" stroke="#ffb021" stroke-width="3.6" stroke-linecap="round"/></svg>
<div class="t" style="left:1967.00px;top:1606.11px;font-size:35px;line-height:35px;color:#0e151b;letter-spacing:-0.965px;">Medium</div>
<div class="t" style="left:2180.50px;top:1606.95px;font-size:34px;line-height:34px;color:#0e151b;letter-spacing:-0.291px;">None</div>
<div class="t" style="left:2462.50px;top:1606.95px;font-size:34px;line-height:34px;color:#0e151b;letter-spacing:-0.276px;">1h 30 min</div>
<svg style="position:absolute;left:2693px;top:1598.735px" width="49" height="49" viewBox="0 0 49 49"><circle cx="24.5" cy="24.5" r="24.5" fill="#e9ecef"/><circle cx="24.3" cy="15.3" r="6.2" fill="#868e96"/><path d="M10.8 35.3 C14 29.5 19 27.4 24.3 27.4 C29.6 27.4 34.6 29.5 37.8 35.3 C34.2 40 29.8 42.2 24.3 42.2 C18.8 42.2 14.4 40 10.8 35.3 Z" fill="#868e96"/></svg>
<div class="t" style="left:2760.40px;top:1606.95px;font-size:34px;line-height:34px;color:#0e151b;letter-spacing:0.550px;width:85.60px;overflow:hidden;">Unassigned</div>
<div style="position:absolute;left:7px;top:1744px;width:2840px;height:2px;background:#dee2e6"></div>
<div style="position:absolute;left:1249px;top:1665px;width:2px;height:79px;background:#dee2e6"></div>
<div style="position:absolute;left:1517px;top:1665px;width:2px;height:79px;background:#dee2e6"></div>
<div style="position:absolute;left:1882px;top:1665px;width:2px;height:79px;background:#dee2e6"></div>
<div style="position:absolute;left:2150px;top:1665px;width:2px;height:79px;background:#dee2e6"></div>
<div style="position:absolute;left:2433px;top:1665px;width:2px;height:79px;background:#dee2e6"></div>
<div style="position:absolute;left:2661px;top:1665px;width:2px;height:79px;background:#dee2e6"></div>
<div class="t" style="left:26.00px;top:1693.85px;font-size:24px;line-height:24px;color:#868e96;">6</div>
<div style="position:absolute;left:99px;top:1684.7px;width:38px;height:38px;box-sizing:border-box;border:2px solid #d3d8dd;border-radius:8px;background:#fff"></div>
<div class="t" style="left:158.00px;top:1686.54px;font-size:35px;line-height:35px;color:#0e151b;letter-spacing:0.680px;">Conduct user interview</div>
<svg style="position:absolute;left:1046px;top:1682.9px" width="55" height="41" viewBox="0 0 55 41"><rect x="1" y="1" width="53" height="39" rx="19.5" fill="#bd93e3"/><circle cx="34.5" cy="20.5" r="17.3" fill="#fff"/><path d="M31 12.6 C32.6 18.4 35 20.8 40.2 22.6 C35 24.4 32.6 26.8 31 32.6 C29.4 26.8 27 24.4 21.8 22.6 C27 20.8 29.4 18.4 31 12.6 Z" fill="#8a4ac8"/><path d="M42 9.0 C42.9 12.5 44.1 13.9 47.8 14.9 C44.1 15.9 42.9 17.3 42 20.8 C41.1 17.3 39.9 15.9 36.2 14.9 C39.9 13.9 41.1 12.5 42 9.0 Z" fill="#8a4ac8"/></svg>
<div class="t" style="left:1130.50px;top:1688.27px;font-size:30px;line-height:30px;color:#7d3ebf;letter-spacing:-0.643px;">Feb 18</div>
<div class="t" style="left:1279.50px;top:1687.81px;font-size:33.5px;line-height:33.5px;color:#0e151b;letter-spacing:0.067px;">Feb 20</div>
<svg style="position:absolute;left:1548px;top:1686.2px" width="35" height="35" viewBox="0 0 35 35"><circle cx="17.5" cy="17.5" r="12.9" fill="none" stroke="#fcb123" stroke-width="4.6"/></svg>
<div class="t" style="left:1590.50px;top:1687.38px;font-size:34px;line-height:34px;color:#0e151b;letter-spacing:0.965px;">In Progress</div>
<svg style="position:absolute;left:1916.4px;top:1687.165px" width="32" height="32" viewBox="0 0 32 32"><path d="M4.5 4.5 C10 1.5 14 3.5 19 5 C23 6 25.5 5.5 28.5 4.5 L22.5 12.5 L28.5 20.5 C25.5 22.5 23 23 19 21.5 C14 19.5 10 18.5 6 20.5" fill="#ffb021" stroke="#ffb021" stroke-width="2.6" stroke-linejoin="round" stroke-linecap="round"/><path d="M5.2 5 V28.5" stroke="#ffb021" stroke-width="3.6" stroke-linecap="round"/></svg>
<div class="t" style="left:1967.00px;top:1686.54px;font-size:35px;line-height:35px;color:#0e151b;letter-spacing:-0.965px;">Medium</div>
<div class="t" style="left:2180.50px;top:1687.38px;font-size:34px;line-height:34px;color:#0e151b;letter-spacing:-0.291px;">None</div>
<div class="t" style="left:2462.50px;top:1687.38px;font-size:34px;line-height:34px;color:#0e151b;letter-spacing:-0.963px;">1h 15 min</div>
<div style="position:absolute;left:2693px;top:1679.165px;width:49px;height:49px;border-radius:50%;background:#16a394"></div>
<div class="t" style="left:2706.00px;top:1695.30px;font-size:18.5px;line-height:18.5px;color:#fff;letter-spacing:0.161px;-webkit-text-stroke:0.75px #fff;">SL</div>
<div class="t" style="left:2761.40px;top:1687.38px;font-size:34px;line-height:34px;color:#0e151b;letter-spacing:-1.180px;width:84.60px;overflow:hidden;">Sarah</div>
<div style="position:absolute;left:7px;top:1824px;width:2840px;height:2px;background:#dee2e6"></div>
<div style="position:absolute;left:1249px;top:1746px;width:2px;height:78px;background:#dee2e6"></div>
<div style="position:absolute;left:1517px;top:1746px;width:2px;height:78px;background:#dee2e6"></div>
<div style="position:absolute;left:1882px;top:1746px;width:2px;height:78px;background:#dee2e6"></div>
<div style="position:absolute;left:2150px;top:1746px;width:2px;height:78px;background:#dee2e6"></div>
<div style="position:absolute;left:2433px;top:1746px;width:2px;height:78px;background:#dee2e6"></div>
<div style="position:absolute;left:2661px;top:1746px;width:2px;height:78px;background:#dee2e6"></div>
<div class="t" style="left:26.00px;top:1774.28px;font-size:24px;line-height:24px;color:#868e96;">7</div>
<div style="position:absolute;left:99px;top:1765.1px;width:38px;height:38px;box-sizing:border-box;border:2px solid #d3d8dd;border-radius:8px;background:#fff"></div>
<div class="t" style="left:158.00px;top:1766.97px;font-size:35px;line-height:35px;color:#0e151b;letter-spacing:0.680px;">Conduct user interview</div>
<svg style="position:absolute;left:1046px;top:1763.3px" width="55" height="41" viewBox="0 0 55 41"><rect x="1" y="1" width="53" height="39" rx="19.5" fill="#bd93e3"/><circle cx="34.5" cy="20.5" r="17.3" fill="#fff"/><path d="M31 12.6 C32.6 18.4 35 20.8 40.2 22.6 C35 24.4 32.6 26.8 31 32.6 C29.4 26.8 27 24.4 21.8 22.6 C27 20.8 29.4 18.4 31 12.6 Z" fill="#8a4ac8"/><path d="M42 9.0 C42.9 12.5 44.1 13.9 47.8 14.9 C44.1 15.9 42.9 17.3 42 20.8 C41.1 17.3 39.9 15.9 36.2 14.9 C39.9 13.9 41.1 12.5 42 9.0 Z" fill="#8a4ac8"/></svg>
<div class="t" style="left:1130.50px;top:1768.70px;font-size:30px;line-height:30px;color:#7d3ebf;letter-spacing:-0.643px;">Feb 18</div>
<div class="t" style="left:1279.50px;top:1768.24px;font-size:33.5px;line-height:33.5px;color:#0e151b;letter-spacing:-0.833px;">Feb 19</div>
<svg style="position:absolute;left:1548px;top:1766.6px" width="35" height="35" viewBox="0 0 35 35"><circle cx="17.5" cy="17.5" r="12.9" fill="none" stroke="#fcb123" stroke-width="4.6"/></svg>
<div class="t" style="left:1590.50px;top:1767.81px;font-size:34px;line-height:34px;color:#0e151b;letter-spacing:0.965px;">In Progress</div>
<svg style="position:absolute;left:1916.4px;top:1767.595px" width="32" height="32" viewBox="0 0 32 32"><path d="M4.5 4.5 C10 1.5 14 3.5 19 5 C23 6 25.5 5.5 28.5 4.5 L22.5 12.5 L28.5 20.5 C25.5 22.5 23 23 19 21.5 C14 19.5 10 18.5 6 20.5" fill="#ffb021" stroke="#ffb021" stroke-width="2.6" stroke-linejoin="round" stroke-linecap="round"/><path d="M5.2 5 V28.5" stroke="#ffb021" stroke-width="3.6" stroke-linecap="round"/></svg>
<div class="t" style="left:1967.00px;top:1766.97px;font-size:35px;line-height:35px;color:#0e151b;letter-spacing:-0.965px;">Medium</div>
<div class="t" style="left:2180.50px;top:1767.81px;font-size:34px;line-height:34px;color:#0e151b;letter-spacing:-0.291px;">None</div>
<div class="t" style="left:2465.00px;top:1767.81px;font-size:34px;line-height:34px;color:#0e151b;letter-spacing:0.791px;">6h</div>
<div style="position:absolute;left:2693px;top:1759.595px;width:49px;height:49px;border-radius:50%;background:#f76809"></div>
<div class="t" style="left:2703.00px;top:1775.73px;font-size:18.5px;line-height:18.5px;color:#fff;letter-spacing:1.350px;-webkit-text-stroke:0.75px #fff;">JW</div>
<div class="t" style="left:2762.40px;top:1767.81px;font-size:34px;line-height:34px;color:#0e151b;letter-spacing:-0.406px;width:83.60px;overflow:hidden;">John Williams</div>
<svg style="position:absolute;left:2300px;top:200px;filter:drop-shadow(0 2px 4px rgba(0,0,0,0.18))" width="220" height="160" viewBox="2300 200 220 160"><path d="M2496.4 214.0 L2365.8 297 L2356 278.5 L2322.5 340.5 L2391 327.5 L2377.5 312 L2497.8 216.6 Z" fill="#f5313f" stroke="#f5313f" stroke-width="5" stroke-linejoin="round"/></svg>
<div style="position:absolute;left:0;top:0;width:2874px;height:1732px;box-sizing:border-box;border:2px solid #c2c2c2;pointer-events:none"></div>
</body></html>
